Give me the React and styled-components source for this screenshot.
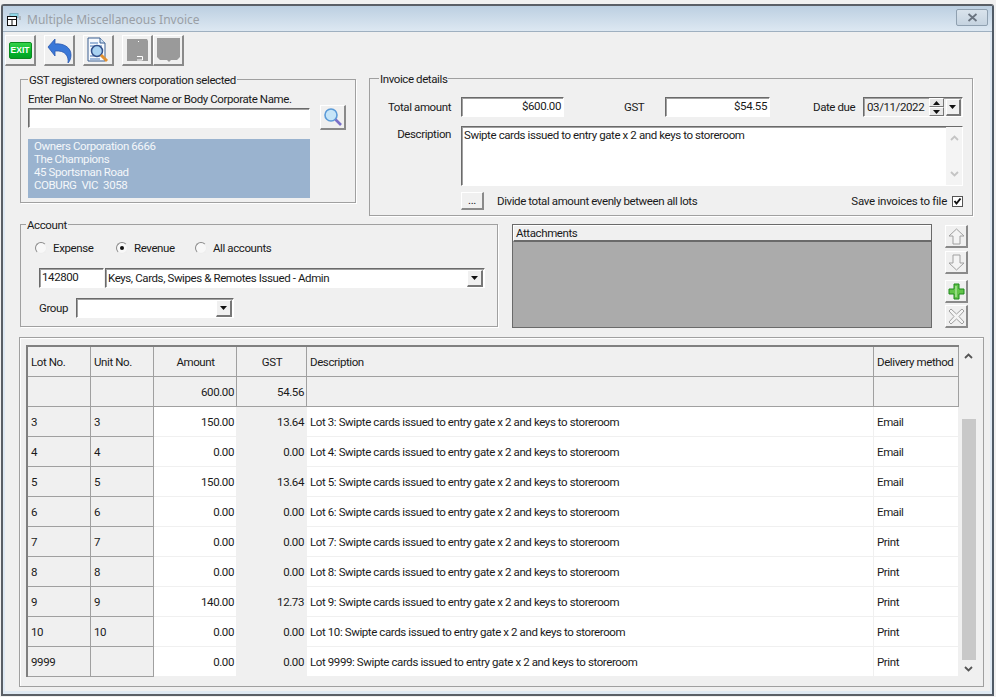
import styled, { createGlobalStyle } from "styled-components";

const GlobalStyle = createGlobalStyle`
    html, body { margin: 0; padding: 0; background: #f0f0f0; }
    body {
        width: 996px;
        height: 697px;
        overflow: hidden;
        font-family: "Roboto", "Liberation Sans", sans-serif;
        font-size: 11.5px;
        letter-spacing: -0.4px;
        color: #1a1a1a;
    }
`;

const Screen = styled.div`
    width: 996px;
    height: 697px;
    padding-top: 4px;
    box-sizing: border-box;
`;

const Frame = styled.div`
    box-sizing: border-box;
    margin-left: 1px;
    width: 993px;
    height: 692px;
    border: 2px solid #5a5f66;
    border-right-color: #4f5a66;
    border-radius: 3px 3px 0 0;
    background: #dfe9f3;
    padding: 0 2px 3px;
    display: flex;
    flex-direction: column;
`;

const TitleBar = styled.div`
    height: 26px;
    flex: none;
    margin: 0 -2px;
    padding: 0 4px 0 4px;
    display: flex;
    align-items: center;
    background: linear-gradient(#bccfe1, #dde8f2);
    border-bottom: 1px solid #9fb0c0;
    box-sizing: border-box;
`;

const TitleText = styled.span`
    font-family: "Noto Sans", sans-serif;
    font-size: 12px;
    letter-spacing: 0;
    color: #9a9fa6;
    margin: 2px 0 0 4px;
    flex: 1;
`;

const CloseButton = styled.div`
    width: 32px;
    height: 17px;
    border: 1px solid #8fa0b0;
    border-radius: 2px;
    background: linear-gradient(#d9e3ec, #c5d3e0);
    box-sizing: border-box;
    display: flex;
    align-items: center;
    justify-content: center;
    margin-top: -3px;
`;

const Body = styled.div`
    flex: 1;
    background: #f0f0f0;
    position: relative;
`;

const Toolbar = styled.div`
    display: flex;
    padding-top: 3px;
    height: 31px;
    box-sizing: content-box;
`;

const ToolButton = styled.div`
    box-sizing: border-box;
    width: 31px;
    height: 31px;
    margin-right: ${props => props.$gap || 0}px;
    border-style: solid;
    border-width: 1px 2px 2px 1px;
    border-color: #fff #8a8a8a #8a8a8a #fff;
    background: #f0f0f0;
    display: flex;
    align-items: center;
    justify-content: center;
`;

const ExitIcon = styled.div`
    width: 23px;
    height: 17px;
    background: linear-gradient(#35d24a, #03b52a 60%, #02a024);
    border: 1px solid #0a8a20;
    border-radius: 2px;
    box-sizing: border-box;
    color: #fff;
    font-family: "Liberation Sans", sans-serif;
    font-size: 8.5px;
    font-weight: bold;
    letter-spacing: 0;
    line-height: 15px;
    text-align: center;
`;

const TopSection = styled.div`
    display: flex;
    align-items: flex-start;
    gap: 13px;
    padding-left: 15px;
    margin-top: 12px;
`;

const MiddleSection = styled.div`
    display: flex;
    align-items: flex-start;
    padding-left: 15px;
    margin-top: 8px;
`;

const Group = styled.div`
    position: relative;
    box-sizing: border-box;
    width: ${props => props.$w}px;
    height: ${props => props.$h}px;
    margin-top: ${props => props.$top || 0}px;
    border: 1px solid #a0a0a0;
    box-shadow: 1px 1px 0 #fff;
`;

const Legend = styled.span`
    position: absolute;
    top: -7px;
    left: ${props => props.$left || 7}px;
    padding: 0 1px;
    background: #f0f0f0;
    line-height: 14px;
    white-space: nowrap;
`;

const OwnerGroup = styled(Group)`
    padding: 12px 0 0 7px;
`;

const FieldLabel = styled.div`
    line-height: 14px;
`;

const SearchRow = styled.div`
    display: flex;
    align-items: center;
    gap: 10px;
    margin-top: -1px;
`;

const Sunken = styled.div`
    box-sizing: border-box;
    width: ${props => props.$w}px;
    height: ${props => props.$h || 20}px;
    border: 1px solid;
    border-color: #6a6a6a #fff #fff #6a6a6a;
    box-shadow: inset 1px 1px 0 #a0a0a0;
    background: ${props => props.$bg || "#fff"};
    padding: 0 2px;
    line-height: 17px;
    text-align: ${props => props.$align || "left"};
    flex: none;
    white-space: nowrap;
`;

const IconButton = styled.div`
    box-sizing: border-box;
    width: ${props => props.$w || 26}px;
    height: ${props => props.$h || 25}px;
    border-style: solid;
    border-width: 1px 2px 2px 1px;
    border-color: #fff #8a8a8a #8a8a8a #fff;
    background: #f0f0f0;
    display: flex;
    align-items: center;
    justify-content: center;
    flex: none;
`;

const AddressPanel = styled.div`
    width: 282px;
    height: 59px;
    margin-top: 9px;
    padding: 1px 0 0 6px;
    box-sizing: border-box;
    background: #9ab3cf;
    color: #f4f7fa;
    line-height: 13px;
`;

const InvoiceGroup = styled(Group)`
    padding: 18px 0 0 9px;
    display: flex;
    flex-direction: column;
`;

const FormRow = styled.div`
    display: flex;
    align-items: ${props => props.$start ? "flex-start" : "center"};
    margin-top: ${props => props.$top || 0}px;
`;

const RowLabel = styled.span`
    width: ${props => props.$w}px;
    margin-left: ${props => props.$left || 0}px;
    margin-right: ${props => props.$right || 0}px;
    padding-top: ${props => props.$pad || 0}px;
    text-align: ${props => props.$align || "left"};
    white-space: nowrap;
    flex: none;
`;

const SaveLabel = styled(RowLabel)`
    letter-spacing: -0.26px;
`;

const DateBox = styled(Sunken)`
    display: flex;
    padding: 0 1px 0 3px;
    align-items: center;
    justify-content: space-between;
`;

const Spinner = styled.div`
    width: 15px;
    height: 18px;
    display: flex;
    flex-direction: column;
    margin-left: 3px;
`;

const SpinPart = styled.div`
    flex: 1;
    border-style: solid;
    border-width: 1px;
    border-color: #fff #777 #777 #fff;
    background: #e8e8e8;
    display: flex;
    align-items: center;
    justify-content: center;
`;

const DropButton = styled.div`
    width: ${props => props.$w || 15}px;
    height: 17px;
    box-sizing: border-box;
    border-style: solid;
    border-width: 1px 2px 2px 1px;
    border-color: #fff #777 #777 #fff;
    background: #f0f0f0;
    display: flex;
    align-items: center;
    justify-content: center;
    flex: none;
`;

const TextArea = styled(Sunken)`
    display: flex;
    justify-content: space-between;
    padding: 0 0 0 2px;
    line-height: 16px;
`;

const AreaScroll = styled.div`
    width: 16px;
    height: 58px;
    background: #f4f4f4;
    display: flex;
    flex-direction: column;
    align-items: center;
    justify-content: space-between;
    padding: 8px 0;
    box-sizing: border-box;
`;

const SmallButton = styled.div`
    box-sizing: border-box;
    width: 23px;
    height: 18px;
    border-style: solid;
    border-width: 1px 2px 2px 1px;
    border-color: #fff #8a8a8a #8a8a8a #fff;
    text-align: center;
    line-height: 14px;
    flex: none;
`;

const CheckBox = styled.div`
    box-sizing: border-box;
    width: 11px;
    height: 11px;
    margin-left: 5px;
    background: #fff;
    border: 1px solid #555;
    display: flex;
    align-items: center;
    justify-content: center;
    flex: none;
`;

const AccountGroup = styled(Group)`
    padding: 15px 0 0 18px;
    flex: none;
`;

const RadioRow = styled.div`
    display: flex;
    height: 16px;
    align-items: center;
`;

const RadioItem = styled.label`
    display: flex;
    align-items: center;
    width: ${props => props.$w}px;
    margin-left: -4px;
`;

const RadioDot = styled.span`
    box-sizing: border-box;
    width: 12px;
    height: 12px;
    margin-right: 6px;
    border-radius: 50%;
    border: 1px solid #8a8a8a;
    border-right-color: #eee;
    border-bottom-color: #eee;
    background: #f8f8f8;
    display: flex;
    align-items: center;
    justify-content: center;
    &::after {
        content: "";
        display: ${props => props.$on ? "block" : "none"};
        width: 4px;
        height: 4px;
        border-radius: 50%;
        background: #111;
    }
`;

const AccountRow = styled.div`
    display: flex;
    gap: 1px;
    margin-top: 12px;
`;

const ComboBox = styled(Sunken)`
    display: flex;
    align-items: center;
    justify-content: space-between;
    padding: 0 1px 0 2px;
`;

const GroupRow = styled.div`
    display: flex;
    align-items: center;
    margin-top: 10px;
`;

const Attachments = styled.div`
    box-sizing: border-box;
    width: 420px;
    height: 104px;
    margin-left: 14px;
    border: 1px solid #6a6a6a;
    background: #ababab;
    flex: none;
`;

const AttachHeader = styled.div`
    height: 17px;
    box-sizing: border-box;
    background: #f0f0f0;
    border-bottom: 2px solid #6a6a6a;
    border-top: 1px solid #fff;
    border-left: 1px solid #fff;
    padding-left: 2px;
    line-height: 14px;
`;

const AttachButtons = styled.div`
    display: flex;
    flex-direction: column;
    margin-left: 13px;
`;

const AttachButton = styled(IconButton)`
    width: 23px;
    height: 23px;
    margin-top: ${props => props.$top || 0}px;
`;

const GridGroup = styled.div`
    box-sizing: border-box;
    width: 965px;
    height: 350px;
    margin: 9px 0 0 14px;
    padding: 7px 0 0 6px;
    border: 1px solid #a0a0a0;
    box-shadow: inset 1px 1px 0 #fff;
    display: flex;
    align-items: flex-start;
`;

const GridTable = styled.table`
    width: 933px;
    table-layout: fixed;
    border-collapse: separate;
    border-spacing: 0;
    border-top: 2px solid #808080;
    border-left: 2px solid #808080;
    flex: none;
    background: #fff;
`;

const Cell = styled.td`
    height: 30px;
    box-sizing: border-box;
    padding: 0 2px 0 3px;
    white-space: nowrap;
    overflow: hidden;
    text-align: ${props => props.$right ? "right" : "left"};
    background: ${props => props.$grey ? "#f0f0f0" : "#fff"};
    border-right: 1px solid ${props => props.$line ? "#a0a0a0" : "#f0f0f0"};
    border-bottom: 1px solid ${props => props.$line ? "#a0a0a0" : "#f0f0f0"};
`;

const HeadCell = styled(Cell).attrs({ as: "th" })`
    font-weight: normal;
    text-align: ${props => props.$center ? "center" : "left"};
`;

const ScrollBar = styled.div`
    width: 17px;
    height: 333px;
    background: #f0f0f0;
    display: flex;
    flex-direction: column;
    align-items: center;
    flex: none;
    padding-left: 1px;
    box-sizing: content-box;
`;

const ScrollArrow = styled.div`
    height: ${props => props.$h}px;
    display: flex;
    align-items: center;
    justify-content: center;
    flex: none;
`;

const ScrollThumb = styled.div`
    width: 14px;
    height: 241px;
    background: #c8c8c8;
    margin-top: 52px;
    flex: none;
`;

const Arrow = ({ up, size = 7 }) => (
    <svg width={size} height={size - 3} viewBox="0 0 7 4">
        <path d={up ? "M3.5 0L7 4H0Z" : "M0 0H7L3.5 4Z"} fill="#111" />
    </svg>
);

const Chevron = ({ up, color = "#555" }) => (
    <svg width="9" height="6" viewBox="0 0 9 6">
        <path d={up ? "M1 5L4.5 1.5L8 5" : "M1 1L4.5 4.5L8 1"} fill="none" stroke={color} strokeWidth="1.8" />
    </svg>
);

const WindowIcon = () => (
    <svg width="16" height="13" viewBox="0 0 16 13" style={{ marginTop: 2 }}>
        <rect x="3" y="0.5" width="8" height="4" fill="#8fd8e8" stroke="#7fb0c0" />
        <path d="M12 3h2v4h-2z" fill="#b0b8c0" />
        <rect x="0.5" y="3.5" width="9" height="9" fill="#fff" stroke="#111" />
        <path d="M1 6.5h8M5 6.5v6" stroke="#111" />
    </svg>
);

const UndoIcon = () => (
    <svg width="25" height="26" viewBox="0 0 25 26">
        <path d="M1 10L8 2V7C16 6 24 10 24 18C24 21 23 24 21 26C22 19 18 13 8 14V19Z" fill="#3a78d8" stroke="#2a58b0" strokeWidth="0.8" />
    </svg>
);

const PreviewIcon = () => (
    <svg width="23" height="26" viewBox="0 0 23 26">
        <path d="M1 1H13L18 6V24H1Z" fill="#f6f9fd" stroke="#3a5f90" />
        <path d="M13 1V6H18" fill="#cfe0f2" stroke="#3a5f90" />
        <path d="M3 6H11M3 9H15M3 19H7M3 22H13" stroke="#4a7ab8" />
        <circle cx="10" cy="14" r="5.5" fill="#a8d2f2" stroke="#32508a" strokeWidth="1.5" />
        <path d="M14 18L20 24" stroke="#e09030" strokeWidth="3" />
    </svg>
);

const GreyDocIcon = () => (
    <svg width="23" height="26" viewBox="0 0 23 26">
        <path d="M1 2H21L22 4V24H1Z" fill="#9a9a9a" />
        <path d="M11 19.5H16.5V23H11" fill="none" stroke="#fff" />
        <rect x="12" y="4" width="1" height="1" fill="#fff" />
    </svg>
);

const GreyBubbleIcon = () => (
    <svg width="25" height="26" viewBox="0 0 25 26">
        <path d="M1 1H24V20L21 23H15L13 25L11 23H4L1 20Z" fill="#9a9a9a" />
    </svg>
);

const LensIcon = () => (
    <svg width="20" height="20" viewBox="0 0 20 20">
        <circle cx="8" cy="8" r="6" fill="#c6e5f8" stroke="#5b9bd8" strokeWidth="1.6" />
        <path d="M12.5 12.5L18 18" stroke="#7a70c8" strokeWidth="2.6" />
    </svg>
);

const OutlineIcon = ({ d }) => (
    <svg width="17" height="17" viewBox="0 0 17 17">
        <path d={d} fill="#f4f4f4" stroke="#a0a0a0" />
    </svg>
);

const PlusIcon = () => (
    <svg width="17" height="17" viewBox="0 0 17 17">
        <path d="M6 1H11V6H16V11H11V16H6V11H1V6H6Z" fill="#62c44a" stroke="#1f8a1c" />
        <path d="M8 3V14" stroke="#a8e498" strokeWidth="1.5" />
    </svg>
);

const ROW_TEXT = "Swipte cards issued to entry gate x 2 and keys to storeroom";

const rows = [
    ["3", "3", "150.00", "13.64", "Email"],
    ["4", "4", "0.00", "0.00", "Email"],
    ["5", "5", "150.00", "13.64", "Email"],
    ["6", "6", "0.00", "0.00", "Email"],
    ["7", "7", "0.00", "0.00", "Print"],
    ["8", "8", "0.00", "0.00", "Print"],
    ["9", "9", "140.00", "12.73", "Print"],
    ["10", "10", "0.00", "0.00", "Print"],
    ["9999", "", "0.00", "0.00", "Print"],
];

export default function App() {
    return (
        <Screen>
            <GlobalStyle />
            <Frame>
                <TitleBar>
                    <WindowIcon />
                    <TitleText>Multiple Miscellaneous Invoice</TitleText>
                    <CloseButton>
                        <svg width="11" height="9" viewBox="0 0 11 9">
                            <path d="M1.5 1L9.5 8M9.5 1L1.5 8" stroke="#6a7480" strokeWidth="1.8" />
                        </svg>
                    </CloseButton>
                </TitleBar>
                <Body>
                    <Toolbar>
                        <ToolButton $gap={8}><ExitIcon>EXIT</ExitIcon></ToolButton>
                        <ToolButton $gap={8}><UndoIcon /></ToolButton>
                        <ToolButton $gap={8}><PreviewIcon /></ToolButton>
                        <ToolButton><GreyDocIcon /></ToolButton>
                        <ToolButton><GreyBubbleIcon /></ToolButton>
                    </Toolbar>

                    <TopSection>
                        <OwnerGroup $w={336} $h={124} $top={1}>
                            <Legend>GST registered owners corporation selected</Legend>
                            <FieldLabel>Enter Plan No. or Street Name or Body Corporate Name.</FieldLabel>
                            <SearchRow>
                                <Sunken $w={282} />
                                <IconButton><LensIcon /></IconButton>
                            </SearchRow>
                            <AddressPanel>
                                Owners Corporation 6666<br />
                                The Champions<br />
                                45 Sportsman Road<br />
                                COBURG&nbsp; VIC&nbsp; 3058
                            </AddressPanel>
                        </OwnerGroup>

                        <InvoiceGroup $w={604} $h={138}>
                            <Legend $left={9}>Invoice details</Legend>
                            <FormRow>
                                <RowLabel $w={72} $right={10} $align="right">Total amount</RowLabel>
                                <Sunken $w={103} $align="right">$600.00</Sunken>
                                <RowLabel $w={27} $left={60}>GST</RowLabel>
                                <Sunken $w={105} $align="right" style={{ marginLeft: 14 }}>$54.55</Sunken>
                                <RowLabel $w={45} $left={43} $right={5}>Date due</RowLabel>
                                <DateBox $w={100} $bg="#f0f0f0">
                                    03/11/2022
                                    <Spinner>
                                        <SpinPart><Arrow up /></SpinPart>
                                        <SpinPart><Arrow /></SpinPart>
                                    </Spinner>
                                    <DropButton><Arrow /></DropButton>
                                </DateBox>
                            </FormRow>
                            <FormRow $start $top={9}>
                                <RowLabel $w={72} $right={10} $pad={1} $align="right">Description</RowLabel>
                                <TextArea $w={502} $h={60}>
                                    {ROW_TEXT}
                                    <AreaScroll>
                                        <Chevron up color="#c4c4c4" />
                                        <Chevron color="#c4c4c4" />
                                    </AreaScroll>
                                </TextArea>
                            </FormRow>
                            <FormRow $top={6}>
                                <RowLabel $w={82} />
                                <SmallButton>...</SmallButton>
                                <RowLabel $w={354} $left={13}>Divide total amount evenly between all lots</RowLabel>
                                <SaveLabel $w={96} $align="right">Save invoices to file</SaveLabel>
                                <CheckBox>
                                    <svg width="9" height="9" viewBox="0 0 9 9">
                                        <path d="M1.5 4L3.5 6.5L7.5 1.5" fill="none" stroke="#111" strokeWidth="2" />
                                    </svg>
                                </CheckBox>
                            </FormRow>
                        </InvoiceGroup>
                    </TopSection>

                    <MiddleSection>
                        <AccountGroup $w={478} $h={103}>
                            <Legend $left={5}>Account</Legend>
                            <RadioRow>
                                <RadioItem $w={85}><RadioDot />Expense</RadioItem>
                                <RadioItem $w={83}><RadioDot $on />Revenue</RadioItem>
                                <RadioItem $w={90}><RadioDot />All accounts</RadioItem>
                            </RadioRow>
                            <AccountRow>
                                <Sunken $w={65}>142800</Sunken>
                                <ComboBox $w={380}>
                                    Keys, Cards, Swipes &amp; Remotes Issued - Admin
                                    <DropButton $w={16}><Arrow /></DropButton>
                                </ComboBox>
                            </AccountRow>
                            <GroupRow>
                                <RowLabel $w={37}>Group</RowLabel>
                                <ComboBox $w={158}>
                                    <span />
                                    <DropButton $w={16}><Arrow /></DropButton>
                                </ComboBox>
                            </GroupRow>
                        </AccountGroup>

                        <Attachments>
                            <AttachHeader>Attachments</AttachHeader>
                        </Attachments>

                        <AttachButtons>
                            <AttachButton $top={1}>
                                <OutlineIcon d="M8.5 1L16 8H12V16H5V8H1Z" />
                            </AttachButton>
                            <AttachButton $top={3}>
                                <OutlineIcon d="M5 1H12V9H16L8.5 16L1 9H5Z" />
                            </AttachButton>
                            <AttachButton $top={6}><PlusIcon /></AttachButton>
                            <AttachButton $top={2}>
                                <OutlineIcon d="M3 1L8.5 6L14 1L16 3L11 8.5L16 14L14 16L8.5 11L3 16L1 14L6 8.5L1 3Z" />
                            </AttachButton>
                        </AttachButtons>
                    </MiddleSection>

                    <GridGroup>
                        <GridTable>
                            <colgroup>
                                <col width="63" />
                                <col width="63" />
                                <col width="83" />
                                <col width="70" />
                                <col width="567" />
                                <col width="85" />
                            </colgroup>
                            <thead>
                                <tr>
                                    <HeadCell $grey $line>Lot No.</HeadCell>
                                    <HeadCell $grey $line>Unit No.</HeadCell>
                                    <HeadCell $grey $line $center>Amount</HeadCell>
                                    <HeadCell $grey $line $center>GST</HeadCell>
                                    <HeadCell $grey $line>Description</HeadCell>
                                    <HeadCell $grey $line>Delivery method</HeadCell>
                                </tr>
                            </thead>
                            <tbody>
                                <tr>
                                    <Cell $grey $line />
                                    <Cell $grey $line />
                                    <Cell $grey $line $right>600.00</Cell>
                                    <Cell $grey $line $right>54.56</Cell>
                                    <Cell $grey $line />
                                    <Cell $grey $line />
                                </tr>
                                {rows.map(row => (
                                    <tr key={row[0]}>
                                        <Cell $grey $line>{row[0]}</Cell>
                                        <Cell $grey $line>{row[1]}</Cell>
                                        <Cell $right>{row[2]}</Cell>
                                        <Cell $grey $right>{row[3]}</Cell>
                                        <Cell>{`Lot ${row[0]}: ${ROW_TEXT}`}</Cell>
                                        <Cell>{row[4]}</Cell>
                                    </tr>
                                ))}
                            </tbody>
                        </GridTable>
                        <ScrollBar>
                            <ScrollArrow $h={22}><Chevron up /></ScrollArrow>
                            <ScrollThumb />
                            <ScrollArrow $h={18}><Chevron /></ScrollArrow>
                        </ScrollBar>
                    </GridGroup>
                </Body>
            </Frame>
        </Screen>
    );
}
